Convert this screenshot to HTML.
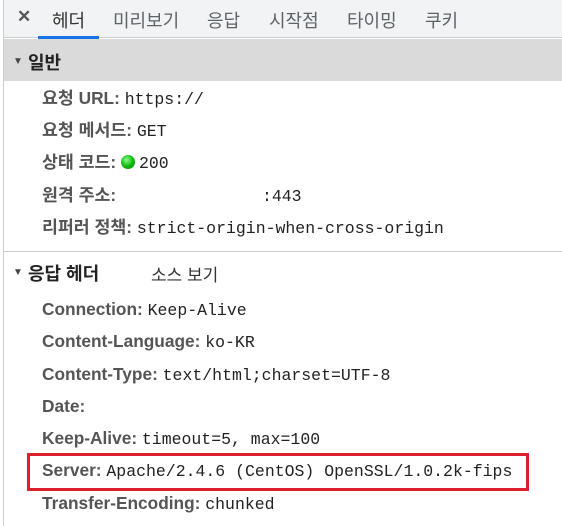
<!DOCTYPE html><html><head><meta charset="utf-8"><style>
*{margin:0;padding:0;box-sizing:border-box}
body{width:562px;height:526px;background:#fff;position:relative;overflow:hidden;font-family:"Liberation Sans","Noto Sans CJK KR",sans-serif;color:#222}
.lb{position:absolute;left:3px;top:0;width:1px;height:526px;background:#ccc}
.tabs{position:absolute;left:4px;top:0;right:0;height:38px;background:#f1f3f4;border-bottom:1px solid #cbcdd1}
.t{position:absolute;top:7px;font-size:18px;color:#5f6368}
.ul{position:absolute;left:38px;top:36px;width:61px;height:3px;background:#1a73e8}
.sec{position:absolute;left:4px;top:39px;right:0;height:42px;background:#dadada}
.h{position:absolute;font-size:18px;font-weight:bold;color:#222}
.tri{position:absolute;font-size:10px;color:#444}
.r{position:absolute;left:42px;font-size:17.3px;white-space:nowrap;height:20px;line-height:20px}
.r b{color:#555;font-weight:bold}
.m{font-family:"Liberation Mono",monospace;font-size:16.5px;color:#222}
.sep{position:absolute;left:4px;right:0;top:251px;height:1px;background:#ccc}
.box{position:absolute;left:27px;top:453px;width:502px;height:38px;border:3px solid #dc1f2c}
.dot{display:inline-block;width:14px;height:14px;border-radius:50%;background:radial-gradient(circle at 40% 35%,#8f8,#1b1 50%,#080);vertical-align:-1px;margin-right:4px}
</style></head><body>
<div class="lb"></div>
<div class="tabs"></div>
<div class="t" style="left:17px;font-weight:bold;color:#555;font-size:17px">✕</div>
<div class="t" style="left:52px;color:#333">헤더</div>
<div class="t" style="left:113px">미리보기</div>
<div class="t" style="left:207px">응답</div>
<div class="t" style="left:269px">시작점</div>
<div class="t" style="left:347px">타이밍</div>
<div class="t" style="left:425px">쿠키</div>
<div class="ul"></div>
<div class="sec"></div>
<div class="tri" style="left:13px;top:56px">▼</div>
<div class="h" style="left:28px;top:49px">일반</div>
<div class="r" style="top:88px"><b>요청 URL:</b> <span class="m">https://</span></div>
<div class="r" style="top:120px"><b>요청 메서드:</b> <span class="m">GET</span></div>
<div class="r" style="top:152px"><b>상태 코드:</b> <span class="dot"></span><span class="m">200</span></div>
<div class="r" style="top:185px"><b>원격 주소:</b> <span class="m" style="margin-left:141px">:443</span></div>
<div class="r" style="top:217px"><b>리퍼러 정책:</b> <span class="m">strict-origin-when-cross-origin</span></div>
<div class="sep"></div>
<div class="tri" style="left:13px;top:267px">▼</div>
<div class="h" style="left:28px;top:260px">응답 헤더</div>
<div class="t" style="left:151px;top:261px;color:#333;font-size:17px">소스 보기</div>
<div class="r" style="top:299px"><b>Connection:</b> <span class="m">Keep-Alive</span></div>
<div class="r" style="top:331px"><b>Content-Language:</b> <span class="m">ko-KR</span></div>
<div class="r" style="top:364px"><b>Content-Type:</b> <span class="m">text/html;charset=UTF-8</span></div>
<div class="r" style="top:396px"><b>Date:</b></div>
<div class="r" style="top:428px"><b>Keep-Alive:</b> <span class="m">timeout=5, max=100</span></div>
<div class="r" style="top:460px"><b>Server:</b> <span class="m">Apache/2.4.6 (CentOS) OpenSSL/1.0.2k-fips</span></div>
<div class="box"></div>
<div class="r" style="top:493px"><b>Transfer-Encoding:</b> <span class="m">chunked</span></div>
</body></html>
